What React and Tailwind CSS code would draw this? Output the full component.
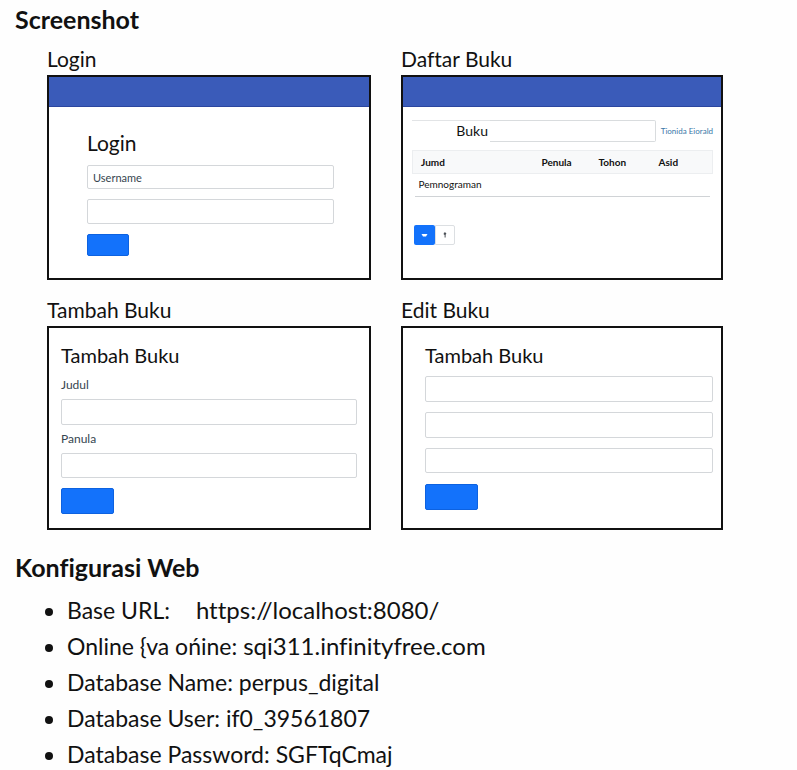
const field =
  "block w-full rounded-[2px] border border-[#d4d7da] bg-white px-[5px] text-[11px] text-[#36454f] placeholder:text-[#36454f] placeholder:opacity-100";

function Panel({ caption, bar, children }) {
  return (
    <figure className="flex flex-col">
      <figcaption className="text-[21px] leading-[32px]">{caption}</figcaption>
      <div className="flex-1 border-2 border-[#111111] bg-white">
        {bar && <div className="h-[30px] border-b border-[#2b469f] bg-[#3a5bb9]" />}
        {children}
      </div>
    </figure>
  );
}

function SubmitButton({ label, className }) {
  return (
    <button
      type="submit"
      aria-label={label}
      className={`block rounded-[2px] border border-[#0d62e0] bg-[#1372fb] ${className}`}
    />
  );
}

function LoginPanel() {
  return (
    <Panel caption="Login" bar>
      <form className="pt-[20px] pr-[35px] pb-[22px] pl-[38px]">
        <h3 className="mb-[6px] text-[21px] leading-[32px]">Login</h3>
        <input
          type="text"
          aria-label="Username"
          placeholder="Username"
          className={`${field} mb-[10px] h-[24px]`}
        />
        <input type="password" aria-label="Password" className={`${field} mb-[10px] h-[25px]`} />
        <SubmitButton label="Login" className="h-[22px] w-[42px]" />
      </form>
    </Panel>
  );
}

function BookListPanel() {
  return (
    <Panel caption="Daftar Buku" bar>
      <div className="pt-[13px] pr-[8px] pb-[32px] pl-[9px]">
        <div className="mb-[8px] flex h-[22px] items-center">
          <label
            htmlFor="search"
            className="h-full w-[78px] border-t border-[#e2e4e6] pr-[2px] text-right text-[14px] leading-[20px]"
          >
            Buku
          </label>
          <input
            id="search"
            type="text"
            className="h-full min-w-0 flex-1 rounded-r-[2px] border-y border-r border-[#d9dcde] bg-white px-[6px] text-[11px]"
          />
          <a href="#tambah" className="ml-[5px] text-[8px] leading-[12px] text-[#3a77a8]">
            Tionida Eiorald
          </a>
        </div>
        <table className="w-full table-fixed border-collapse text-left text-[10px]">
          <thead>
            <tr className="h-[23px] border border-[#eceef0] bg-[#f8f9fa]">
              <th className="w-[43%] pl-[8px] font-bold">Jumd</th>
              <th className="w-[19%] font-bold">Penula</th>
              <th className="w-[20%] font-bold">Tohon</th>
              <th className="font-bold">Asid</th>
            </tr>
          </thead>
          <tbody>
            <tr className="h-[22px]">
              <td className="pl-[6px]">Pemnograman</td>
              <td />
              <td />
              <td />
            </tr>
          </tbody>
        </table>
        <hr className="mx-[3px] border-[#d0d3d6]" />
        <div className="mt-[28px] ml-[2px] flex">
          <button
            type="button"
            aria-label="Buka"
            className="flex h-[20px] w-[21px] items-center justify-center rounded-[2px] bg-[#1372fb]"
          >
            <svg width="7" height="4" viewBox="0 0 7 4" fill="#ffffff">
              <path d="M0.5 1h6L5 3.4H2Z" />
            </svg>
          </button>
          <button
            type="button"
            aria-label="Naik"
            className="flex h-[20px] w-[20px] items-center justify-center rounded-r-[2px] border border-[#dcdfe2] bg-white"
          >
            <svg width="4" height="6" viewBox="0 0 4 6" fill="#4a4f55">
              <path d="M1 0.5h1.6l0.8 1.2-0.8 1V5.4H1.6V3L0.6 2.2Z" />
            </svg>
          </button>
        </div>
      </div>
    </Panel>
  );
}

function AddBookPanel() {
  return (
    <Panel caption="Tambah Buku">
      <form className="px-[12px] pt-[11px] pb-[14px]">
        <h3 className="text-[20px] leading-[32px]">Tambah Buku</h3>
        <label htmlFor="judul" className="my-[4px] block text-[12px] leading-[20px] text-[#36454f]">
          Judul
        </label>
        <input id="judul" type="text" className={`${field} h-[26px]`} />
        <label htmlFor="panula" className="my-[4px] block text-[12px] leading-[20px] text-[#36454f]">
          Panula
        </label>
        <input id="panula" type="text" className={`${field} mb-[10px] h-[25px]`} />
        <SubmitButton label="Simpan" className="h-[26px] w-[53px]" />
      </form>
    </Panel>
  );
}

function EditBookPanel() {
  return (
    <Panel caption="Edit Buku">
      <form className="pt-[11px] pr-[8px] pb-[18px] pl-[22px]">
        <h3 className="mb-[5px] text-[20px] leading-[32px]">Tambah Buku</h3>
        <input type="text" aria-label="Judul" className={`${field} mb-[10px] h-[26px]`} />
        <input type="text" aria-label="Penulis" className={`${field} mb-[10px] h-[26px]`} />
        <input type="text" aria-label="Tahun" className={`${field} mb-[11px] h-[25px]`} />
        <SubmitButton label="Simpan" className="h-[26px] w-[53px]" />
      </form>
    </Panel>
  );
}

const settings = [
  ["Base URL:", "https://localhost:8080/", "ml-[20px] text-[24px]"],
  ["Online {va ońine:", "sqi311.infinityfree.com", "text-[24px]"],
  ["Database Name:", "perpus_digital", ""],
  ["Database User:", "if0_39561807", ""],
  ["Database Password:", "SGFTqCmaj", ""],
];

export default function App() {
  return (
    <main className="bg-[#fefefe] pt-[3px] font-[Lato,'Noto_Sans',sans-serif] text-[#111111] [font-variant-ligatures:none]">
      <h2 className="pl-[15px] text-[25px] leading-[32px] font-bold">Screenshot</h2>
      <section className="mt-[8px] grid grid-cols-[324fr_322fr] gap-x-[30px] gap-y-[14px] pr-[74px] pl-[47px]">
        <LoginPanel />
        <BookListPanel />
        <AddBookPanel />
        <EditBookPanel />
      </section>
      <h2 className="mt-[21px] pl-[15px] text-[25px] leading-[32px] font-bold">Konfigurasi Web</h2>
      <ul className="mt-[9px] list-disc pl-[67px] text-[23px] leading-[36px]">
        {settings.map(([name, value, style]) => (
          <li key={name}>
            {name} <span className={style}>{value}</span>
          </li>
        ))}
      </ul>
    </main>
  );
}
